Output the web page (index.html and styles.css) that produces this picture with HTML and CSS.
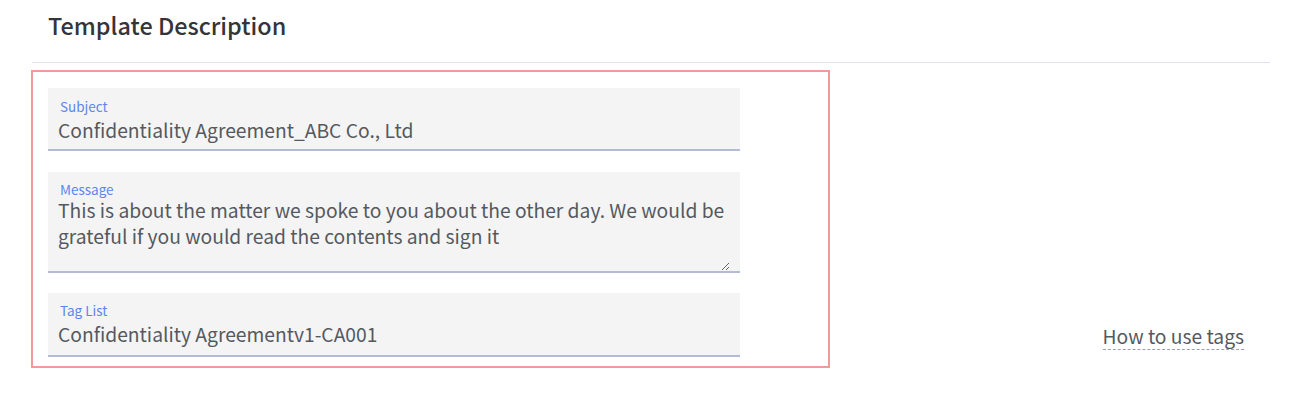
FILE: index.html
```html
<!DOCTYPE html>
<html lang="en">
<head>
<meta charset="utf-8">
<title>Template Description</title>
<link rel="stylesheet" href="styles.css">
</head>
<body>
<section class="panel">
  <h2 class="panel-title">Template Description</h2>
  <div class="panel-body">
    <div class="form-box">
      <div class="field">
        <label class="field-label" for="subject">Subject</label>
        <input class="field-input" id="subject" type="text" value="Confidentiality Agreement_ABC Co., Ltd" readonly>
      </div>
      <div class="field field-area">
        <label class="field-label" for="message">Message</label>
        <textarea class="field-textarea" id="message" readonly>This is about the matter we spoke to you about the other day. We would be grateful if you would read the contents and sign it</textarea>
      </div>
      <div class="field field-tags">
        <label class="field-label" for="tags">Tag List</label>
        <input class="field-input" id="tags" type="text" value="Confidentiality Agreementv1-CA001" readonly>
      </div>
    </div>
    <a class="help-link" href="#">How to use tags</a>
  </div>
</section>
</body>
</html>
```
FILE: styles.css
```css
* { box-sizing: border-box; }
html, body { margin: 0; padding: 0; background: #ffffff; }
body {
  font-family: "Noto Sans CJK JP", "Noto Sans", sans-serif;
  color: #555a60;
}
.panel {
  width: 1238px;
  margin-left: 32px;
}
.panel-title {
  margin: 0;
  padding: 9px 0 0 16px;
  height: 63px;
  font-size: 23.4px;
  line-height: 32px;
  font-weight: 500;
  color: #333538;
  border-bottom: 1px solid #dfe2ea;
}
.panel-body {
  display: flex;
  align-items: flex-end;
  padding-top: 7px;
}
.form-box {
  margin-left: -1px;
  width: 799px;
  border: 2px solid #f09a9a;
  padding: 16px 88px 9px 15px;
  display: flex;
  flex-direction: column;
  gap: 21px;
}
.field {
  background: #f4f4f4;
  border-bottom: 2px solid #b3bbd6;
  padding: 10px 10px 0 10px;
  display: flex;
  flex-direction: column;
}
.field-area { padding-top: 9px; }
.field-tags { margin-top: -1px; padding-top: 9px; }
.field-label {
  font-size: 13.5px;
  line-height: 16px;
  color: #5b86ee;
  padding-left: 2px;
}
.field-input,
.field-textarea {
  font-family: inherit;
  font-size: 19.25px;
  line-height: 26px;
  color: #55595f;
  background: transparent;
  border: 0;
  outline: none;
  padding: 0;
  margin: 3px 0 6px 0;
  width: 100%;
}
.field-tags .field-input { margin-bottom: 8px; }
.field-input { height: 26px; }
.field-textarea {
  height: 74px;
  margin: 0;
  resize: vertical;
  display: block;
}
.help-link {
  margin-left: auto;
  margin-right: 26px;
  margin-bottom: 18px;
  font-size: 19.25px;
  line-height: 26px;
  color: #55595f;
  text-decoration: none;
  border-bottom: 1px dashed #9aa0b4;
}
```
